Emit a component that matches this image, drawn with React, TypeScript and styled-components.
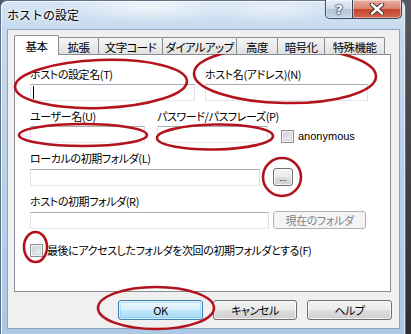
import React from 'react';
import styled, { createGlobalStyle, css } from 'styled-components';

const jp = `"Noto Sans CJK JP", "Noto Sans", sans-serif`;

const Global = createGlobalStyle`
  html, body { margin: 0; padding: 0; background: #3b3d42; }
  body { width: 411px; height: 334px; overflow: hidden; font-family: ${jp}; }
  * { box-sizing: border-box; }
`;

const Stage = styled.div`
  position: relative;
  width: 411px;
  height: 334px;
  background: linear-gradient(180deg, #55585e 0%, #2c2d31 100%);
`;

const Window = styled.div`
  width: 406px;
  height: 334px;
  border: 1px solid #5f7188;
  border-bottom: none;
  border-radius: 7px 7px 0 0;
  padding: 0 5px 5px 6px;
  display: flex;
  flex-direction: column;
  background:
    radial-gradient(ellipse 90px 16px at 150px 6px, rgba(255,255,255,0.65), rgba(255,255,255,0) 100%),
    radial-gradient(ellipse 70px 14px at 270px 8px, rgba(255,255,255,0.5), rgba(255,255,255,0) 100%),
    linear-gradient(180deg, #d6e5f4 0px, #c6daef 28px, #b7cfe9 60%, #adc8e5 100%);
  box-shadow: inset 1px 1px 0 rgba(255,255,255,0.75), inset -1px 0 0 rgba(255,255,255,0.5);
`;

const TitleBar = styled.div`
  height: 28px;
  display: flex;
  align-items: flex-start;
`;

const Title = styled.div`
  line-height: 28px;
  font-size: 12px;
  color: #000;
  white-space: nowrap;
  text-shadow: 0 0 6px #fff, 0 0 3px #fff;
`;

const CaptionButtons = styled.div`
  margin-left: auto;
  margin-right: -2px;
  margin-top: -1px;
  display: flex;
`;

const captionBase = css`
  height: 19px;
  border: 1px solid #3a4a5e;
  border-top: none;
  display: flex;
  align-items: center;
  justify-content: center;
  box-shadow: inset 0 0 0 1px rgba(255,255,255,0.45);
`;

const HelpButton = styled.div`
  ${captionBase};
  width: 28px;
  border-radius: 0 0 0 5px;
  background: linear-gradient(180deg, #e6eef7 0%, #cbd9e8 50%, #b3c5d9 51%, #c2d3e5 100%);
  font-family: "DejaVu Sans", sans-serif;
  font-weight: bold;
  font-size: 13px;
  color: #fff;
  text-shadow: 0 0 1px #2b3b4f, 0 0 2px #2b3b4f, 0 0 2px #2b3b4f;
`;

const CloseButton = styled.div`
  ${captionBase};
  width: 49px;
  border-left: none;
  border-radius: 0 0 5px 0;
  background: linear-gradient(180deg, #eab0a4 0%, #d9806d 50%, #c5452d 51%, #d4644c 100%);
`;

const Client = styled.div`
  flex: 1;
  display: flex;
  flex-direction: column;
  background: #f0f0f0;
  border: 1px solid #8fa3bb;
  padding: 5px 8px 0 6px;
`;

const TabStrip = styled.div`
  position: relative;
  z-index: 1;
  height: 19px;
  display: flex;
  align-items: flex-end;
`;

const Tab = styled.div<{ $w: number; $active?: boolean }>`
  position: relative;
  width: ${(p) => p.$w}px;
  height: ${(p) => (p.$active ? 20 : 17)}px;
  margin-bottom: ${(p) => (p.$active ? -1 : 0)}px;
  margin-left: -1px;
  &:first-child { margin-left: 0; }
  z-index: ${(p) => (p.$active ? 2 : 1)};
  border: 1px solid #898c95;
  border-bottom: none;
  border-radius: 2px 2px 0 0;
  background: ${(p) => (p.$active ? '#ffffff' : 'linear-gradient(180deg, #f6f6f6 0%, #ebebeb 50%, #e0e0e0 100%)')};
  font-size: 11.5px;
  letter-spacing: -0.6px;
  font-feature-settings: "palt";
  color: #000;
  display: flex;
  align-items: center;
  justify-content: center;
  padding-top: ${(p) => (p.$active ? 0 : 1)}px;
  white-space: nowrap;
`;

const Panel = styled.div`
  height: 238px;
  background: #fff;
  border: 1px solid #898c95;
  padding: 12px 0 0 15px;
  display: flex;
  flex-direction: column;
  gap: 8px;
`;

const Row = styled.div<{ $gap: number }>`
  display: flex;
  align-items: flex-end;
  gap: ${(p) => p.$gap}px;
`;

const Field = styled.div<{ $w?: number }>`
  display: flex;
  flex-direction: column;
  gap: 3px;
  ${(p) => (p.$w ? `width: ${p.$w}px;` : '')}
`;

const textStyle = css`
  font-size: 11px;
  letter-spacing: -0.4px;
  font-feature-settings: "palt";
  color: #000;
  white-space: nowrap;
`;

const Label = styled.div`
  ${textStyle};
  height: 14px;
  line-height: 14px;
`;

const InputLine = styled.div<{ $gap: number }>`
  display: flex;
  align-items: center;
  gap: ${(p) => p.$gap}px;
`;

const TextBox = styled.div<{ $w: number }>`
  width: ${(p) => p.$w}px;
  height: 17px;
  background: #fff;
  border: 1px solid;
  border-color: #abadb3 #dbdfe6 #e3e9ef #e2e3ea;
  display: flex;
  align-items: center;
  padding-left: 2px;
`;

const Caret = styled.span`
  width: 1px;
  height: 13px;
  background: #000;
`;

const Button = styled.div<{ $w: number; $h?: number; $variant?: 'default' | 'disabled' }>`
  ${textStyle};
  width: ${(p) => p.$w}px;
  height: ${(p) => p.$h ?? 20}px;
  border: 1px solid #707070;
  border-radius: 3px;
  background: linear-gradient(180deg, #f2f2f2 0%, #ebebeb 48%, #dddddd 52%, #cfcfcf 100%);
  box-shadow: inset 0 0 0 1px rgba(255,255,255,0.7);
  display: flex;
  align-items: center;
  justify-content: center;
  ${(p) =>
    p.$variant === 'default' &&
    css`
      border-color: #3c7fb1;
      background: linear-gradient(180deg, #eaf6fd 0%, #d9f0fc 48%, #bee6fd 52%, #a7d9f5 100%);
      box-shadow: inset 0 0 0 1px rgba(255,255,255,0.6), inset 0 0 0 2px rgba(110,190,235,0.35);
    `}
  ${(p) =>
    p.$variant === 'disabled' &&
    css`
      border-color: #adb2b5;
      background: #f4f4f4;
      box-shadow: none;
      color: #838383;
    `}
`;

const Dots = styled.span`
  font-family: "Liberation Sans", sans-serif;
  font-size: 9px;
  letter-spacing: 0;
  margin-top: 2px;
`;

const CheckRow = styled.div<{ $mt?: number; $ml?: number }>`
  display: flex;
  align-items: center;
  gap: 4px;
  margin-top: ${(p) => p.$mt ?? 0}px;
  margin-left: ${(p) => p.$ml ?? 0}px;
`;

const CheckBox = styled.span`
  width: 13px;
  height: 13px;
  flex: none;
  border: 1px solid #8f8f8f;
  background: linear-gradient(135deg, #c9ccd1 0%, #e2e4e7 55%, #f4f4f4 100%);
  box-shadow: inset 0 0 0 1px #f4f4f4, inset 0 0 0 2px #d4d6da;
`;

const CheckText = styled.span<{ $latin?: boolean }>`
  ${textStyle};
  line-height: 14px;
  ${(p) =>
    p.$latin &&
    css`
      font-family: "Liberation Sans", sans-serif;
      letter-spacing: 0;
    `}
`;

const ButtonRow = styled.div`
  display: flex;
  justify-content: flex-end;
  margin-top: 8px;
  margin-right: -1px;
  gap: 10px;
`;

const Overlay = styled.svg`
  position: absolute;
  left: 0;
  top: 0;
  width: 411px;
  height: 334px;
  pointer-events: none;
`;

const tabs = [
  { t: '基本', w: 45, a: true },
  { t: '拡張', w: 41 },
  { t: '文字コード', w: 65 },
  { t: 'ダイアルアップ', w: 75 },
  { t: '高度', w: 42 },
  { t: '暗号化', w: 48 },
  { t: '特殊機能', w: 61 },
];

const marks = [
  { cx: 101, cy: 84, rx: 86, ry: 24, r: -2 },
  { cx: 285, cy: 75, rx: 91, ry: 28, r: 1 },
  { cx: 83, cy: 135, rx: 64, ry: 11, r: 0 },
  { cx: 215, cy: 137, rx: 58, ry: 12.5, r: -1 },
  { cx: 282, cy: 177, rx: 19, ry: 19, r: 0 },
  { cx: 35.5, cy: 247, rx: 11.5, ry: 15, r: 0 },
  { cx: 156, cy: 308, rx: 58, ry: 21, r: 0 },
];

export default function App() {
  return (
    <Stage>
      <Global />
      <Window>
        <TitleBar>
          <Title>ホストの設定</Title>
          <CaptionButtons>
            <HelpButton>?</HelpButton>
            <CloseButton>
              <svg width="16" height="12" viewBox="0 0 16 12">
                <path d="M3 1.5 L13 10.5 M13 1.5 L3 10.5" stroke="#3a2420" strokeWidth="4.4" strokeLinecap="round" />
                <path d="M3 1.5 L13 10.5 M13 1.5 L3 10.5" stroke="#ffffff" strokeWidth="2.6" strokeLinecap="round" />
              </svg>
            </CloseButton>
          </CaptionButtons>
        </TitleBar>
        <Client>
          <TabStrip>
            {tabs.map((t) => (
              <Tab key={t.t} $w={t.w} $active={t.a}>
                {t.t}
              </Tab>
            ))}
          </TabStrip>
          <Panel>
            <Row $gap={10}>
              <Field $w={165}>
                <Label>ホストの設定名(T)</Label>
                <TextBox $w={165}>
                  <Caret />
                </TextBox>
              </Field>
              <Field $w={163}>
                <Label>ホスト名(アドレス)(N)</Label>
                <TextBox $w={163} />
              </Field>
            </Row>
            <Row $gap={12}>
              <Field $w={115}>
                <Label>ユーザー名(U)</Label>
                <TextBox $w={115} />
              </Field>
              <Field $w={111}>
                <Label>パスワード/パスフレーズ(P)</Label>
                <TextBox $w={111} />
              </Field>
              <CheckRow $ml={1}>
                <CheckBox />
                <CheckText $latin>anonymous</CheckText>
              </CheckRow>
            </Row>
            <Field>
              <Label>ローカルの初期フォルダ(L)</Label>
              <InputLine $gap={13}>
                <TextBox $w={230} />
                <Button $w={20} $h={18}>
                  <Dots>...</Dots>
                </Button>
              </InputLine>
            </Field>
            <Field>
              <Label>ホストの初期フォルダ(R)</Label>
              <InputLine $gap={4}>
                <TextBox $w={239} />
                <Button $w={93} $h={18} $variant="disabled">
                  現在のフォルダ
                </Button>
              </InputLine>
            </Field>
            <CheckRow $mt={6}>
              <CheckBox />
              <CheckText>最後にアクセスしたフォルダを次回の初期フォルダとする(F)</CheckText>
            </CheckRow>
          </Panel>
          <ButtonRow>
            <Button $w={85} $variant="default">
              OK
            </Button>
            <Button $w={84}>キャンセル</Button>
            <Button $w={85}>ヘルプ</Button>
          </ButtonRow>
        </Client>
      </Window>
      <Overlay viewBox="0 0 411 334">
        {marks.map((m, i) => (
          <ellipse
            key={i}
            cx={m.cx}
            cy={m.cy}
            rx={m.rx}
            ry={m.ry}
            transform={`rotate(${m.r} ${m.cx} ${m.cy})`}
            fill="none"
            stroke="#b3131d"
            strokeWidth={2.6}
          />
        ))}
      </Overlay>
    </Stage>
  );
}
